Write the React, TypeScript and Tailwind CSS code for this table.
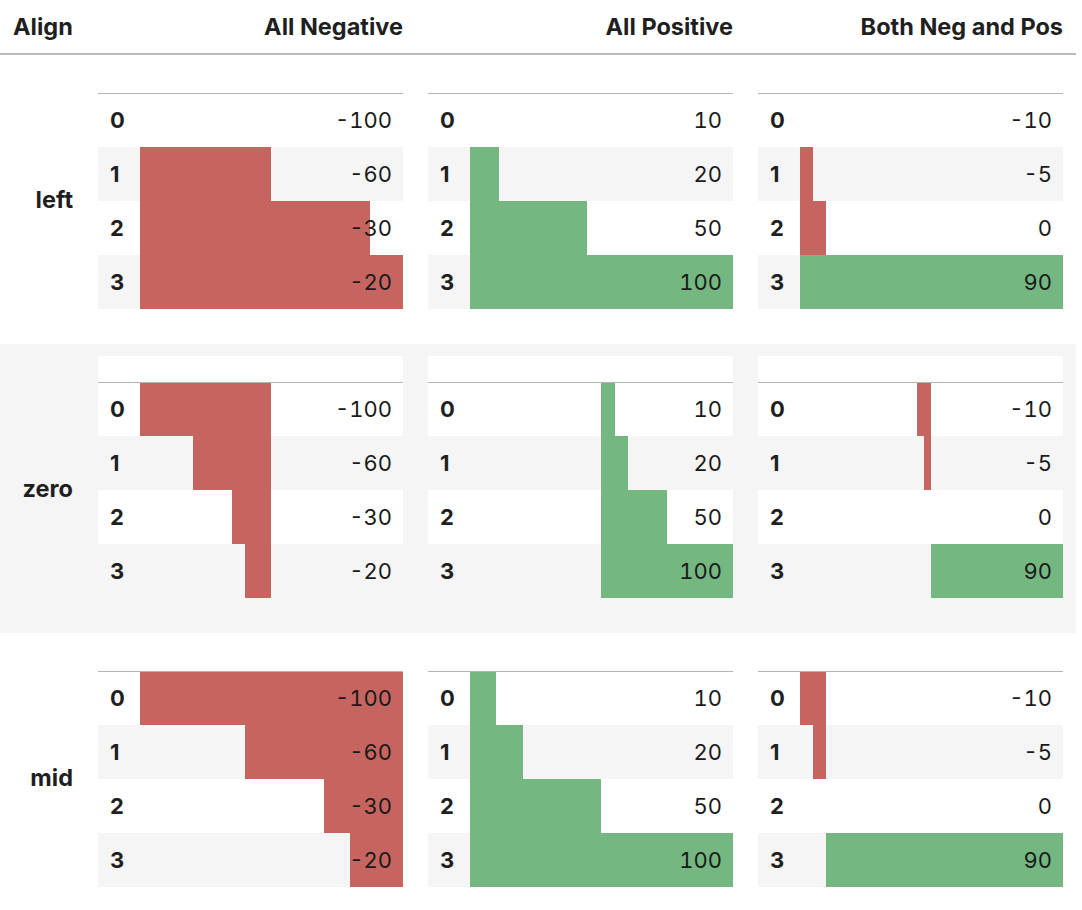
import React from "react";

const RED = "#c6655f";
const GREEN = "#74b781";

type Align = "left" | "zero" | "mid";

const cols: { title: string; data: number[] }[] = [
  { title: "All Negative", data: [-100, -60, -30, -20] },
  { title: "All Positive", data: [10, 20, 50, 100] },
  { title: "Both Neg and Pos", data: [-10, -5, 0, 90] },
];

function bar(v: number, data: number[], align: Align): [number, number, string] | null {
  const min = Math.min(...data);
  const max = Math.max(...data);
  const color = v > 0 ? GREEN : RED;
  let a = 0;
  let b = 0;
  if (align === "left") {
    a = 0;
    b = (v - min) / (max - min);
  } else if (align === "zero") {
    const m = Math.max(Math.abs(min), Math.abs(max));
    const e = 0.5 + v / (2 * m);
    a = Math.min(0.5, e);
    b = Math.max(0.5, e);
  } else {
    let z: number;
    let range: number;
    if (max <= 0) {
      z = 1;
      range = -min;
    } else if (min >= 0) {
      z = 0;
      range = max;
    } else {
      range = max - min;
      z = -min / range;
    }
    const e = z + v / range;
    a = Math.min(z, e);
    b = Math.max(z, e);
  }
  if (b - a <= 0) return null;
  return [a * 100, b * 100, color];
}

function InnerTable({ data, align }: { data: number[]; align: Align }) {
  return (
    <table className="w-[305px] border-collapse table-fixed">
      <colgroup>
        <col className="w-[42px]" />
        <col className="w-[263px]" />
      </colgroup>
      <thead>
        <tr className="h-[26px] bg-white border-b border-[#b4b4b4]">
          <th className="p-0"></th>
          <th className="p-0"></th>
        </tr>
      </thead>
      <tbody>
        {data.map((v, i) => {
          const bg = i % 2 === 1 ? "bg-[#f5f5f5]" : "bg-white";
          const b = bar(v, data, align);
          const style = b
            ? {
                backgroundImage: `linear-gradient(90deg, transparent ${b[0]}%, ${b[2]} ${b[0]}%, ${b[2]} ${b[1]}%, transparent ${b[1]}%)`,
              }
            : undefined;
          return (
            <tr key={i} className="h-[54px]">
              <th className={`${bg} pl-3 pr-0 text-left font-bold text-[22px] leading-[30px] p-0`}>{i}</th>
              <td className={`${bg} pr-[11px] text-right text-[22px] leading-[30px] tabular-nums text-[#1a1a1a]`} style={style}>
                {v}
              </td>
            </tr>
          );
        })}
      </tbody>
    </table>
  );
}

export default function App() {
  const aligns: Align[] = ["left", "zero", "mid"];
  return (
    <div className="w-[1082px] min-h-[910px] bg-white text-[#1f1f1f] font-['Inter','Noto_Sans',sans-serif]">
      <table className="w-[1076px] border-collapse table-fixed">
        <colgroup>
          <col className="w-[86px]" />
          <col className="w-[330px]" />
          <col className="w-[330px]" />
          <col className="w-[330px]" />
        </colgroup>
        <thead>
          <tr className="h-[54px] border-b-2 border-[#bababa]">
            <th className="pl-[13px] pr-0 text-left font-bold text-[23.5px] whitespace-nowrap">Align</th>
            {cols.map((c) => (
              <th key={c.title} className="pl-3 pr-[13px] text-right font-bold text-[23.5px] whitespace-nowrap">
                {c.title}
              </th>
            ))}
          </tr>
        </thead>
        <tbody>
          {aligns.map((al, ri) => (
            <tr key={al} className={ri === 1 ? "bg-[#f5f5f5]" : "bg-white"}>
              <th className="pr-[13px] text-right font-bold text-[23.5px] align-middle">{al}</th>
              {cols.map((c) => (
                <td key={c.title} className="pl-3 pr-[13px] pt-3 pb-[35px] align-top">
                  <InnerTable data={c.data} align={al} />
                </td>
              ))}
            </tr>
          ))}
        </tbody>
      </table>
    </div>
  );
}
